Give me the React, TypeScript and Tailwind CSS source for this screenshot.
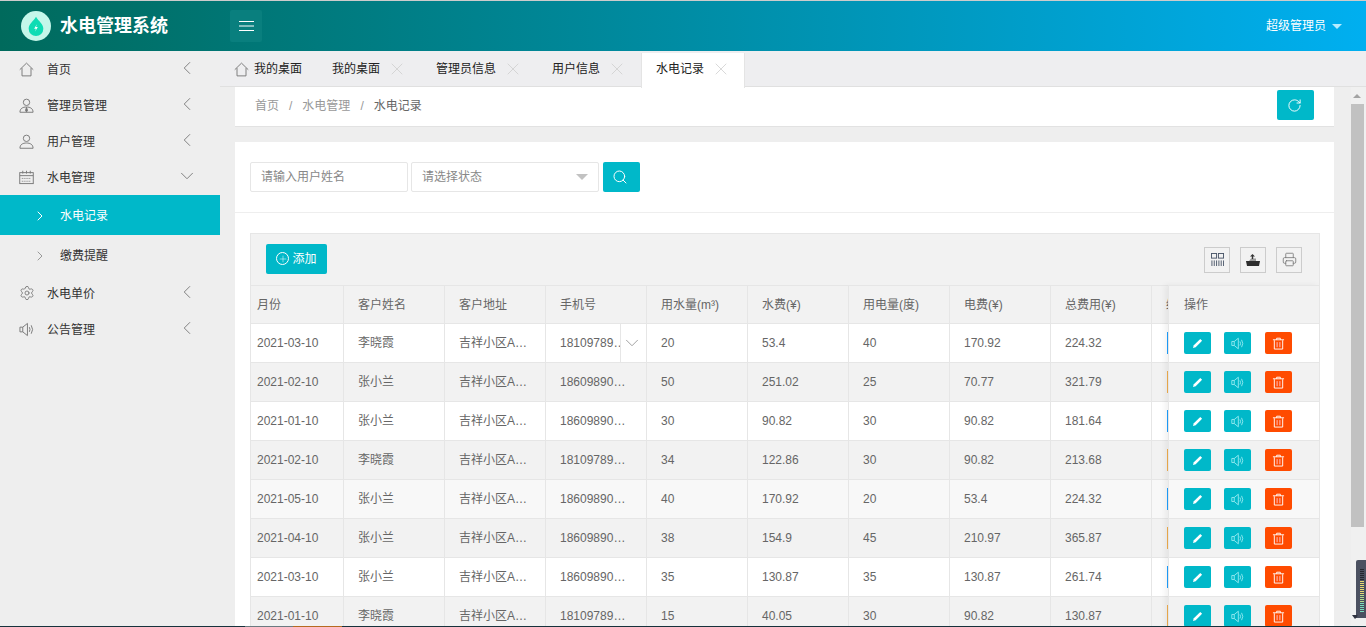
import { ChevronDown, ChevronLeft, ChevronRight, Plus, Printer, RotateCw, Search, Settings, X } from "lucide-react";
import type { ReactNode } from "react";

const font = "font-['Liberation_Sans','Noto_Sans_CJK_SC',sans-serif]";

const columns = [
  { label: "月份", w: "w-[93px]" },
  { label: "客户姓名", w: "w-[101px]" },
  { label: "客户地址", w: "w-[101px]" },
  { label: "手机号", w: "w-[101px]" },
  { label: "用水量(m³)", w: "w-[101px]" },
  { label: "水费(¥)", w: "w-[101px]" },
  { label: "用电量(度)", w: "w-[101px]" },
  { label: "电费(¥)", w: "w-[101px]" },
  { label: "总费用(¥)", w: "w-[101px]" },
  { label: "缴", w: "w-[30px]" },
];

const rows = [
  ["2021-03-10", "李晓霞", "吉祥小区A…", "18109789…", "20", "53.4", "40", "170.92", "224.32"],
  ["2021-02-10", "张小兰", "吉祥小区A…", "18609890…", "50", "251.02", "25", "70.77", "321.79"],
  ["2021-01-10", "张小兰", "吉祥小区A…", "18609890…", "30", "90.82", "30", "90.82", "181.64"],
  ["2021-02-10", "李晓霞", "吉祥小区A…", "18109789…", "34", "122.86", "30", "90.82", "213.68"],
  ["2021-05-10", "张小兰", "吉祥小区A…", "18609890…", "40", "170.92", "20", "53.4", "224.32"],
  ["2021-04-10", "张小兰", "吉祥小区A…", "18609890…", "38", "154.9", "45", "210.97", "365.87"],
  ["2021-03-10", "张小兰", "吉祥小区A…", "18609890…", "35", "130.87", "35", "130.87", "261.74"],
  ["2021-01-10", "李晓霞", "吉祥小区A…", "18109789…", "15", "40.05", "30", "90.82", "130.87"],
];

function rowBg(i: number) {
  if (i % 2 === 1) return "bg-[#f2f2f2]";
  return i === 4 ? "bg-[#f8f8f8]" : "bg-white";
}

function HomeIcon() {
  return (
    <svg viewBox="0 0 16 16" className="size-[15px]" fill="none" stroke="currentColor">
      <path d="M.8 8.2 8 1.2l7.2 7" />
      <path d="M3.2 6.5v8.3h9.6V6.5" />
    </svg>
  );
}

function UserIcon({ tie }: { tie?: boolean }) {
  return (
    <svg viewBox="0 0 16 16" className="size-[15px]" fill="none" stroke="currentColor">
      <circle cx="8" cy="4.6" r="3.4" />
      <path d="M1 15.2c0-4 3-5.6 7-5.6s7 1.600 7 5.600z" />
      {tie && <path d="M8 10l-1 3 1 2 1-2z" fill="currentColor" />}
    </svg>
  );
}

function CalendarIcon() {
  return (
    <svg viewBox="0 0 16 16" className="size-[15px]" fill="none" stroke="currentColor">
      <rect x=".8" y="2.800" width="14.400" height="11.700" />
      <path d="M4 .8v3M8 .8v3M12 .8v3M1 6h14" />
      <path d="M3 9h10M3 12h10" strokeDasharray="1 1" />
    </svg>
  );
}

function SpeakerIcon({ className }: { className: string }) {
  return (
    <svg viewBox="0 0 16 16" className={className} fill="none" stroke="currentColor">
      <path d="M1 5.500h3v5H1zM4 5.500l5-4v13l-5-4" />
      <path d="M11 5.500q1.500 2.500 0 5M13 3.500q3 4.500 0 9" />
    </svg>
  );
}

function PencilIcon() {
  return (
    <svg viewBox="0 0 12 12" className="size-[11px]" fill="currentColor">
      <path d="M9 1l2 2-7 7-3 1 1-3z" />
    </svg>
  );
}

function TrashIcon() {
  return (
    <svg viewBox="0 0 14 14" className="size-[13px]" fill="none" stroke="currentColor">
      <path d="M1 3h12M5 3V1.300h4V3" />
      <path d="M2.500 3.500v9.500h9V3.500" />
      <path d="M5.500 5.500v5.500M8.500 5.500v5.500" stroke="#ffc4d0" />
    </svg>
  );
}

function GridIcon() {
  return (
    <svg viewBox="0 0 14 14" className="size-[13px]" fill="none" stroke="#4a5568">
      <rect x=".5" y=".5" width="5.500" height="5" />
      <rect x="8" y=".5" width="5.500" height="5" />
      <path d="M1 8v6M3.500 8v6M6 8v6M8.500 8v6M11 8v6M13.500 8v6" />
    </svg>
  );
}

function ExportIcon() {
  return (
    <svg viewBox="0 0 14 14" className="size-[14px]">
      <path d="M0 8h14l-1 5H1z" fill="#2d2d2d" />
      <path d="M3 8l2-2.500h5V8z" fill="#9a9a9a" />
      <path d="M6.500 1L4 3.500h1.800V6h1.400V3.500H9z" fill="#333" />
    </svg>
  );
}

function LevelWidget() {
  return (
    <svg viewBox="0 0 14 62" className="h-[62px] w-[14px]">
      <path d="M4 2q0-2 2-2h8v58H4z" fill="#4b5060" />
      <path d="M0 55h6v-1l-1 3-2 2z" fill="#2e3240" />
      <path d="M8 9.500h4M8 11.500h4M8 13.500h4M8 15.500h4M8 17.500h4M8 19.500h4" stroke="#24262e" />
      <path d="M8 21.500h4M8 23.500h4M8 25.500h4M8 27.500h4M8 29.500h4M8 31.500h4M8 33.500h4" stroke="#e6d873" />
      <path d="M8 35.500h4M8 37.500h4M8 39.500h4M8 41.500h4" stroke="#b3dc8f" />
      <path d="M8 43.500h4M8 45.500h4M8 47.500h4M8 49.500h4M8 51.500h4" stroke="#7adcbc" />
    </svg>
  );
}

function NavItem({ icon, label, open }: { icon: ReactNode; label: string; open?: boolean }) {
  return (
    <div className="flex h-9 items-center pl-[19px] pr-[22px] text-xs text-[#333]">
      <span className="w-[28px] text-[#777]">{icon}</span>
      <span className="flex-1 pt-[2px]">{label}</span>
      {open ? (
        <ChevronDown className="-mt-[2px] size-[22px] text-[#777]" strokeWidth={1} />
      ) : (
        <ChevronLeft className="-mt-[2px] size-[22px] text-[#777]" strokeWidth={1} />
      )}
    </div>
  );
}

function Tab({ label, active, home, close = true }: { label: string; active?: boolean; home?: boolean; close?: boolean }) {
  return (
    <div className={`-mb-[2px] flex h-[35px] items-center pb-[3px] pl-[14px] text-xs text-[#222] ${close ? "pr-[13px]" : "pr-[14px]"} ${active ? "bg-white shadow-[1px_0_0_#e4e4e4,-1px_0_0_#e4e4e4]" : ""}`}>
      {home && (
        <span className="mr-[5px] text-[#777]">
          <HomeIcon />
        </span>
      )}
      {label}
      {close && <X className="ml-[7px] size-5 text-[#ccc]" strokeWidth={0.9} />}
    </div>
  );
}

function ToolButton({ children }: { children: ReactNode }) {
  return <div className="flex size-[26px] items-center justify-center border border-[#ccc]">{children}</div>;
}

function ActionButton({ danger, children, className = "" }: { danger?: boolean; children: ReactNode; className?: string }) {
  return (
    <div className={`flex h-[22px] w-[27px] items-center justify-center rounded-[2px] text-white ${danger ? "bg-[#ff4b00]" : "bg-[#00b8c9]"} ${className}`}>
      {children}
    </div>
  );
}

export default function App() {
  return (
    <div className={`${font} relative flex h-[627px] w-[1366px] flex-col overflow-hidden bg-[#eeeeee]`}>
      <header className="flex h-[51px] shrink-0 items-center border-t border-[#ccc] bg-gradient-to-r from-[#006a5c] to-[#00aff0] text-white">
        <div className="flex w-[230px] items-center pl-[21px]">
          <div className="flex size-[30px] items-center justify-center rounded-full bg-[#c5f7ea]">
            <svg viewBox="0 0 24 24" className="size-[22px]">
              <path d="M12 2 C15 7 20 10 20 15 A8 8 0 0 1 4 15 C4 10 9 7 12 2Z" fill="#0fdcb4" />
              <path d="M13 10 l-3 5 h2 l-1 3 l3-5 h-2z" fill="#fff" />
            </svg>
          </div>
          <span className="ml-[9px] text-lg font-bold">水电管理系统</span>
        </div>
        <div className="flex size-8 items-center justify-center rounded-[2px] bg-[#097f7e]">
          <svg viewBox="0 0 15 10" className="h-[10px] w-[15px]" stroke="#fff">
            <path d="M0 .5h15M0 5h15M0 9.500h15" />
          </svg>
        </div>
        <div className="ml-auto mr-6 flex items-center text-xs">
          超级管理员
          <span className="ml-[6px] size-0 border-x-[5px] border-t-[5px] border-x-transparent border-t-[#b5ecff]" />
        </div>
      </header>

      <div className="flex min-h-0 flex-1">
        <aside className="w-[220px] shrink-0">
          <NavItem icon={<HomeIcon />} label="首页" />
          <NavItem icon={<UserIcon tie />} label="管理员管理" />
          <NavItem icon={<UserIcon />} label="用户管理" />
          <NavItem icon={<CalendarIcon />} label="水电管理" open />
          <div className="flex h-10 items-center bg-[#00b8c9] pl-8 pt-[2px] text-xs text-white">
            <ChevronRight className="mr-3 size-4" strokeWidth={1.5} />
            水电记录
          </div>
          <div className="flex h-10 items-center pl-8 pt-[2px] text-xs text-[#333]">
            <ChevronRight className="mr-3 size-4 text-[#999]" strokeWidth={1.5} />
            缴费提醒
          </div>
          <NavItem icon={<Settings className="size-4" strokeWidth={1.3} />} label="水电单价" />
          <NavItem icon={<SpeakerIcon className="size-[15px]" />} label="公告管理" />
        </aside>

        <main className="flex min-w-0 flex-1 flex-col">
          <div className="relative z-10 flex h-[36px] shrink-0 items-end gap-[2px] border-b border-[#e0e0e0] bg-[#eeeef0]">
            <Tab label="我的桌面" home close={false} />
            <Tab label="我的桌面" />
            <Tab label="管理员信息" />
            <Tab label="用户信息" />
            <Tab label="水电记录" active />
          </div>

          <div className="flex min-h-0 flex-1">
            <div className="min-w-0 flex-1 overflow-hidden pl-[15px] pr-[17px]">
              <div className="flex h-10 items-center justify-between border-b border-[#e2e2e2] bg-white pb-[3px] pl-5 pr-5 text-xs text-[#999]">
                <div className="pt-[2px]">
                  首页<span className="mx-[10px]">/</span>水电管理<span className="mx-[10px]">/</span>
                  <span className="text-[#666]">水电记录</span>
                </div>
                <div className="flex h-[30px] w-[37px] items-center justify-center rounded-[2px] bg-[#00b8c9] text-white">
                  <RotateCw className="-ml-[2px] size-[15px]" strokeWidth={1.5} />
                </div>
              </div>

              <div className="mt-[15px] bg-white">
                <div className="flex h-[71px] items-center gap-[3px] border-b border-[#eee] pl-[15px] text-xs text-[#888]">
                  <div className="flex h-[30px] w-[158px] items-center rounded-[2px] border border-[#e6e6e6] pl-[10px]">请输入用户姓名</div>
                  <div className="flex h-[30px] w-[188px] items-center justify-between rounded-[2px] border border-[#e6e6e6] px-[10px]">
                    请选择状态
                    <span className="size-0 border-x-[6px] border-t-[6px] border-x-transparent border-t-[#c2c2c2]" />
                  </div>
                  <div className="ml-[1px] flex h-[30px] w-[37px] items-center justify-center rounded-[2px] bg-[#00b8c9] text-white">
                    <Search className="-ml-[3px] size-4" strokeWidth={1.5} />
                  </div>
                </div>

                <div className="pl-[15px] pr-[14px] pt-5">
                  <div className="relative overflow-hidden border-x border-t border-[#e6e6e6]">
                    <div className="flex h-[51px] items-center justify-between bg-[#f2f2f2] pl-[15px] pr-[17px]">
                      <div className="-mt-[2px] flex h-[30px] w-[61px] items-center justify-center gap-[3px] rounded-[2px] bg-[#00b8c9] text-xs text-white">
                        <span className="flex size-[13px] items-center justify-center rounded-full border border-white">
                          <Plus className="size-[10px]" strokeWidth={1.2} />
                        </span>
                        添加
                      </div>
                      <div className="flex gap-[10px]">
                        <ToolButton><GridIcon /></ToolButton>
                        <ToolButton><ExportIcon /></ToolButton>
                        <ToolButton><Printer className="size-[15px] text-[#777]" strokeWidth={1.3} /></ToolButton>
                      </div>
                    </div>

                    <div className="w-[1200px] text-xs text-[#666]">
                      <div className="flex h-[39px] items-center border-y border-[#e6e6e6] bg-[#f2f2f2]">
                        {columns.map((c) => (
                          <div key={c.label} className={`${c.w} flex h-full shrink-0 items-center border-r border-[#e6e6e6] pl-[14px] first:pl-[6px]`}>{c.label}</div>
                        ))}
                      </div>
                      {rows.map((r, i) => (
                        <div key={i} className={`flex h-[39px] items-center border-b border-[#e6e6e6] ${rowBg(i)}`}>
                          {r.map((v, j) => (
                            <div key={j} className={`${columns[j].w} relative flex h-full shrink-0 items-center border-r border-[#e6e6e6] pl-[14px] first:pl-[6px]`}>
                              {v}
                              {i === 0 && j === 3 && (
                                <div className="absolute inset-y-0 right-0 flex w-[26px] items-center justify-center border-l border-[#e6e6e6] bg-white pr-[3px] text-[#999]">
                                  <ChevronDown className="size-6" strokeWidth={1} />
                                </div>
                              )}
                            </div>
                          ))}
                          <div className={`ml-[15px] h-[22px] w-[4px] ${i % 2 === 1 ? "bg-[#f0ad4e]" : "bg-[#1e9fff]"}`} />
                        </div>
                      ))}
                    </div>

                    <div className="absolute bottom-0 right-0 top-[51px] w-[151px] border-l border-[#e6e6e6] text-xs text-[#666] shadow-[-3px_0_6px_rgba(0,0,0,0.06)]">
                      <div className="flex h-[39px] items-center border-y border-[#e6e6e6] bg-[#f2f2f2] pl-[15px]">操作</div>
                      {rows.map((_, i) => (
                        <div key={i} className={`flex h-[39px] items-center gap-[13px] border-b border-[#e6e6e6] pl-[15px] ${rowBg(i)}`}>
                          <ActionButton><PencilIcon /></ActionButton>
                          <ActionButton><SpeakerIcon className="size-[13px] text-[#a6f0f5]" /></ActionButton>
                          <ActionButton danger className="ml-[1px]"><TrashIcon /></ActionButton>
                        </div>
                      ))}
                    </div>
                  </div>
                </div>
              </div>
            </div>

            <div className="flex w-[15px] shrink-0 flex-col items-start bg-[#f0f0f0] pt-[7px]">
              <span className="ml-[2px] size-0 border-x-[4px] border-b-[4px] border-x-transparent border-b-[#a3a3a3]" />
              <div className="mt-[6px] h-[423px] w-[13px] bg-[#c1c1c1]" />
            </div>
          </div>
        </main>
      </div>

      {/* desktop widget and taskbar edge that show at the bottom of the screenshot */}
      <div className="absolute bottom-[5px] right-0">
        <LevelWidget />
      </div>
      <div className="absolute inset-x-0 bottom-0 flex h-px bg-[#17323c]">
        <span className="ml-[245px] w-[48px] bg-[#6b7a80]" />
        <span className="w-[49px] bg-[#b56a20]" />
      </div>
    </div>
  );
}
